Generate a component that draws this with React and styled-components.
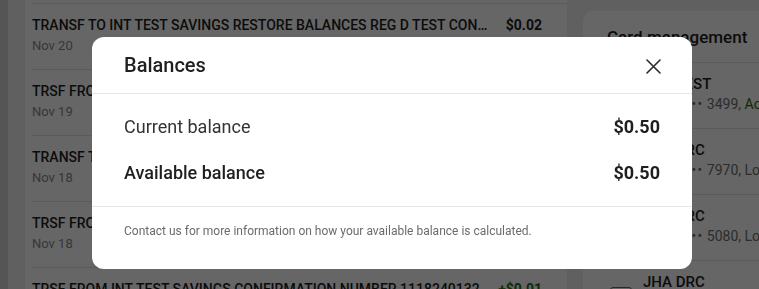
import React from "react";
import styled, { createGlobalStyle } from "styled-components";

const GlobalStyle = createGlobalStyle`
  html, body { margin: 0; padding: 0; height: 100%; }
  body {
    font-family: Roboto, "Noto Sans", "Liberation Sans", sans-serif;
    overflow: hidden;
    background: #efefef;
  }
  * { box-sizing: border-box; }
`;

const Page = styled.div`
  display: flex;
  height: 289px;
  width: 759px;
  overflow: hidden;
  background: #efefef;
`;

const Rail = styled.div`
  width: 8px;
  flex: none;
  background: #d4d4d4;
`;

const Content = styled.div`
  display: flex;
  gap: 16px;
  padding-left: 17px;
  flex: 1;
  min-width: 0;
`;

const TxCard = styled.section`
  width: 542px;
  flex: none;
  background: #ffffff;
  padding-top: 3px;
`;

const TxRow = styled.div`
  display: flex;
  align-items: flex-start;
  gap: 18px;
  height: 66px;
  margin-left: 7px;
  padding: 11px 25px 0 0;
  border-top: 1px solid #e2e2e2;
`;

const TxMain = styled.div`
  flex: 1;
  min-width: 0;
`;

const TxTitle = styled.div`
  font-size: 14px;
  font-weight: 500;
  line-height: 20px;
  color: #1e1e1e;
  white-space: nowrap;
  overflow: hidden;
  text-overflow: ellipsis;
`;

const TxDate = styled.div`
  margin-top: 2px;
  font-size: 13px;
  line-height: 18px;
  color: #8a8a8a;
`;

const TxAmount = styled.div`
  font-size: 14px;
  font-weight: 700;
  line-height: 20px;
  color: ${(p) => (p.$credit ? "#2a6e0e" : "#1e1e1e")};
  white-space: nowrap;
`;

const SideCard = styled.section`
  margin-top: 11px;
  width: 240px;
  flex: none;
  background: #ffffff;
  border-radius: 10px 10px 0 0;
`;

const SideHeader = styled.div`
  height: 52px;
  display: flex;
  align-items: center;
  padding-left: 24px;
  font-size: 17px;
  font-weight: 500;
  color: #1e1e1e;
  border-bottom: 1px solid #e2e2e2;
`;

const CardItem = styled.div`
  display: flex;
  align-items: flex-start;
  gap: 11px;
  height: 66px;
  padding: 11px 0 0 27px;
  border-bottom: 1px solid #e2e2e2;
  white-space: nowrap;
`;

const CardIcon = styled.div`
  width: 22px;
  height: 16px;
  margin-top: 15px;
  border: 1.5px solid #6a6a6a;
  border-radius: 3px;
  flex: none;
`;

const CardTitle = styled.div`
  font-size: 15px;
  font-weight: 500;
  line-height: 20px;
  color: #1e1e1e;
`;

const CardSub = styled.div`
  font-size: 14px;
  line-height: 20px;
  color: #6f6f6f;
`;

const Dots = styled.span`
  letter-spacing: 1.5px;
  margin-right: 3px;
`;

const Status = styled.span`
  color: ${(p) => (p.$ok ? "#2e6a0a" : "#6f6f6f")};
`;

const Overlay = styled.div`
  position: fixed;
  inset: 0;
  background: rgba(0, 0, 0, 0.6);
  display: flex;
  align-items: center;
  justify-content: center;
  padding: 16px 0 0 25px;
`;

const Modal = styled.div`
  width: 600px;
  background: #ffffff;
  border-radius: 12px;
  overflow: hidden;
`;

const ModalHeader = styled.div`
  height: 57px;
  display: flex;
  align-items: center;
  justify-content: space-between;
  padding: 1px 32px 0;
  border-bottom: 1px solid #e6e6e6;
`;

const ModalTitle = styled.h2`
  margin: 0;
  font-size: 20px;
  font-weight: 500;
  color: #1f1f1f;
`;

const CloseButton = styled.button`
  border: 0;
  background: none;
  padding: 0;
  margin: 3px -1px 0 0;
  width: 16px;
  height: 16px;
  display: flex;
  align-items: center;
  justify-content: center;
  cursor: pointer;
  color: #2a2a2a;
`;

const ModalBody = styled.div`
  padding: 10px 32px;
  border-bottom: 1px solid #e6e6e6;
`;

const BalanceRow = styled.div`
  height: 46px;
  display: flex;
  align-items: center;
  justify-content: space-between;
  font-size: 18px;
  color: #222222;
`;

const BalanceLabel = styled.span`
  font-weight: ${(p) => (p.$strong ? 500 : 400)};
  color: ${(p) => (p.$strong ? "#1f1f1f" : "#333333")};
`;

const BalanceValue = styled.span`
  font-weight: 700;
  color: #1f1f1f;
`;

const ModalFooter = styled.div`
  padding: 16px 32px 30px;
  font-size: 12px;
  line-height: 16px;
  color: #6b6b6b;
`;

const transactions = [
  { title: "TRANSF TO INT TEST SAVINGS RESTORE BALANCES REG D TEST CONFIRMATION NUMBER 1118240155", date: "Nov 20", amount: "$0.02" },
  { title: "TRSF FROM INT TEST SAVINGS CONFIRMATION NUMBER 1119240132", date: "Nov 19", amount: "+$0.01", credit: true },
  { title: "TRANSF TO INT TEST SAVINGS RESTORE BALANCES REG D TEST CONFIRMATION NUMBER 1118240140", date: "Nov 18", amount: "$0.02" },
  { title: "TRSF FROM INT TEST SAVINGS CONFIRMATION NUMBER 1118240136", date: "Nov 18", amount: "+$0.01", credit: true },
  { title: "TRSF FROM INT TEST SAVINGS CONFIRMATION NUMBER 1118240132", date: "Nov 18", amount: "+$0.01", credit: true },
];

const cards = [
  { name: "JHA TEST", last: "3499", status: "Active", ok: true },
  { name: "JHA DRC", last: "7970", status: "Locked" },
  { name: "JHA DRC", last: "5080", status: "Locked" },
  { name: "JHA DRC", last: "6621", status: "Locked" },
];

export default function App() {
  return (
    <>
      <GlobalStyle />
      <Page>
        <Rail />
        <Content>
          <TxCard>
            {transactions.map((t, i) => (
              <TxRow key={i}>
                <TxMain>
                  <TxTitle>{t.title}</TxTitle>
                  <TxDate>{t.date}</TxDate>
                </TxMain>
                <TxAmount $credit={t.credit}>{t.amount}</TxAmount>
              </TxRow>
            ))}
          </TxCard>
          <SideCard>
            <SideHeader>Card management</SideHeader>
            {cards.map((c, i) => (
              <CardItem key={i}>
                <CardIcon />
                <div>
                  <CardTitle>{c.name}</CardTitle>
                  <CardSub>
                    Debit <Dots>••••</Dots>{c.last}, <Status $ok={c.ok}>{c.status}</Status>
                  </CardSub>
                </div>
              </CardItem>
            ))}
          </SideCard>
        </Content>
      </Page>
      <Overlay>
        <Modal role="dialog" aria-label="Balances">
          <ModalHeader>
            <ModalTitle>Balances</ModalTitle>
            <CloseButton aria-label="Close">
              <svg width="15" height="15" viewBox="0 0 15 15" fill="none">
                <path d="M1 1L14 14M14 1L1 14" stroke="currentColor" strokeWidth="1.6" strokeLinecap="round" />
              </svg>
            </CloseButton>
          </ModalHeader>
          <ModalBody>
            <BalanceRow>
              <BalanceLabel>Current balance</BalanceLabel>
              <BalanceValue>$0.50</BalanceValue>
            </BalanceRow>
            <BalanceRow>
              <BalanceLabel $strong>Available balance</BalanceLabel>
              <BalanceValue>$0.50</BalanceValue>
            </BalanceRow>
          </ModalBody>
          <ModalFooter>
            Contact us for more information on how your available balance is calculated.
          </ModalFooter>
        </Modal>
      </Overlay>
    </>
  );
}
